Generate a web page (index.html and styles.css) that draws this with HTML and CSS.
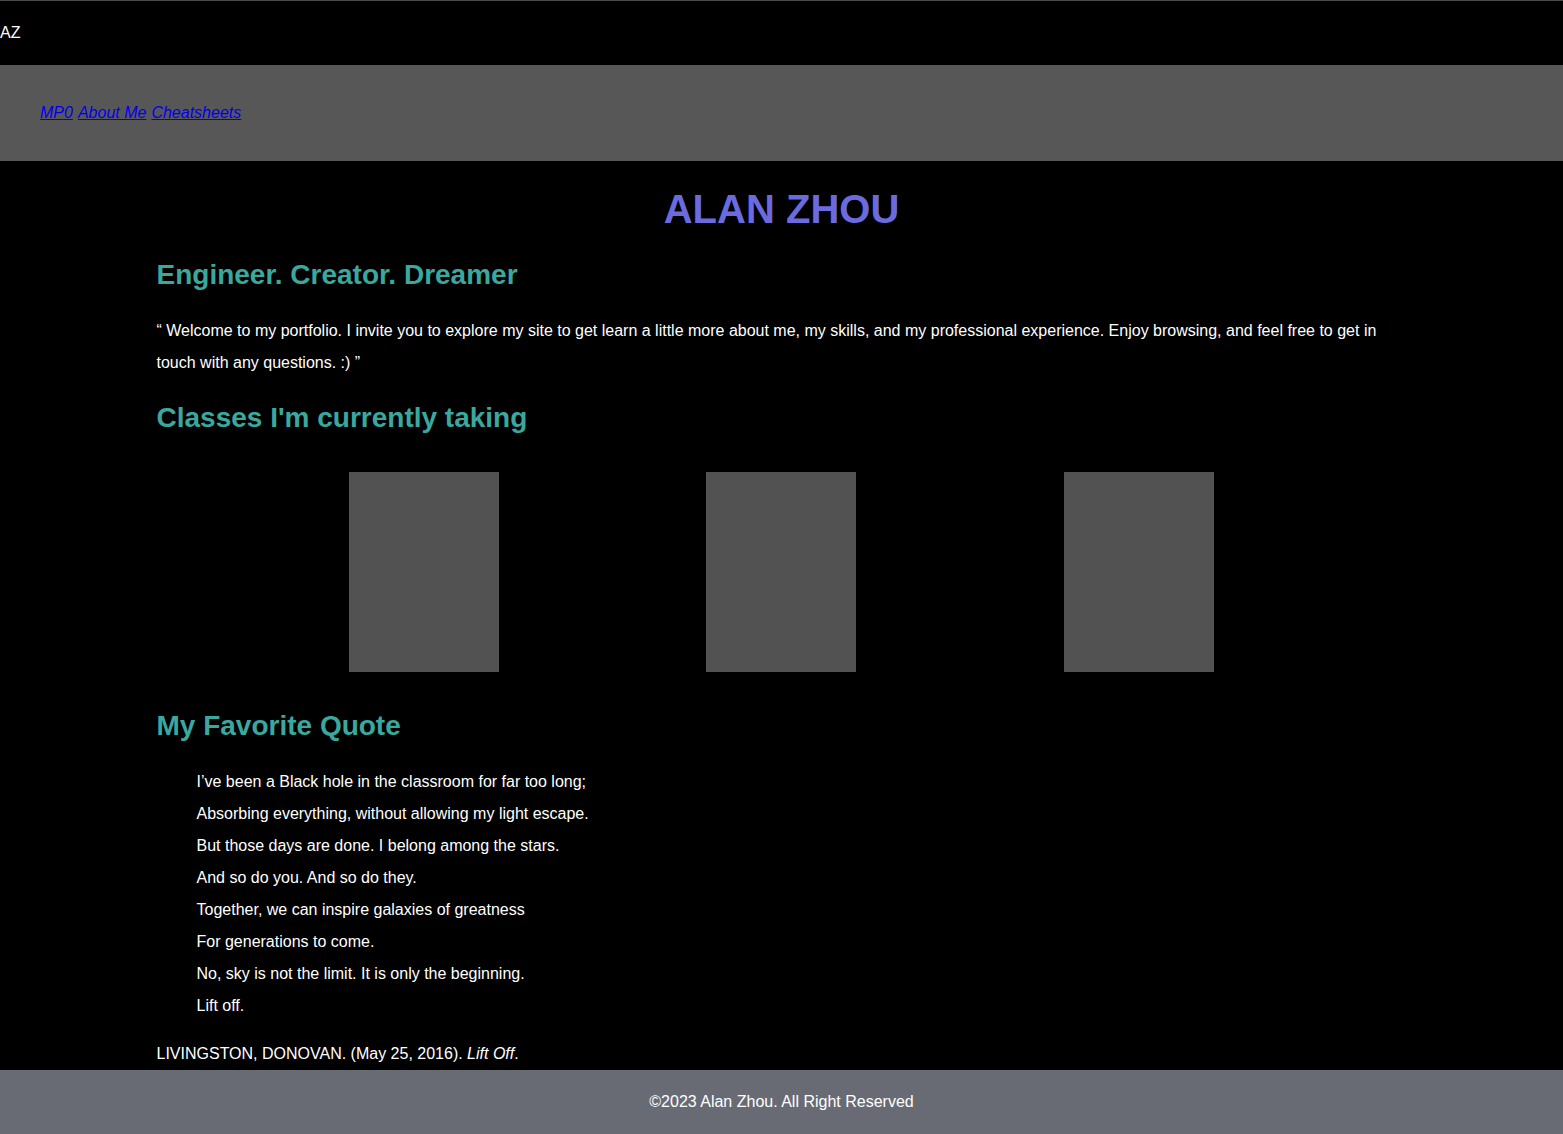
FILE: index.html
```html
<!DOCTYPE html>
<html lang="en">
<head>
<meta charset="utf-8">
<title>Alan Zhou</title>
<link rel="stylesheet" href="styles.css">
</head>
<body>
<header class="topbar">
  <span class="logo">AZ</span>
</header>
<nav class="navbar">
  <a href="#">MP0</a>
  <a href="#">About Me</a>
  <a href="#">Cheatsheets</a>
</nav>
<main class="content">
  <h1 class="title">ALAN ZHOU</h1>
  <h2 class="section-head first">Engineer. Creator. Dreamer</h2>
  <p class="intro">“ Welcome to my portfolio. I invite you to explore my site to get learn a little more about me, my skills, and my professional experience. Enjoy browsing, and feel free to get in touch with any questions. :) ”</p>
  <h2 class="section-head classes-head">Classes I'm currently taking</h2>
  <div class="classes">
    <div class="class-card"></div>
    <div class="class-card"></div>
    <div class="class-card"></div>
  </div>
  <h2 class="section-head quote-head">My Favorite Quote</h2>
  <blockquote class="poem">
    <p>I’ve been a Black hole in the classroom for far too long;</p>
    <p>Absorbing everything, without allowing my light escape.</p>
    <p>But those days are done. I belong among the stars.</p>
    <p>And so do you. And so do they.</p>
    <p>Together, we can inspire galaxies of greatness</p>
    <p>For generations to come.</p>
    <p>No, sky is not the limit. It is only the beginning.</p>
    <p>Lift off.</p>
  </blockquote>
  <p class="cite">LIVINGSTON, DONOVAN. (May 25, 2016). <em>Lift Off</em>.</p>
</main>
<footer class="footer">©2023 Alan Zhou. All Right Reserved</footer>
</body>
</html>
```
FILE: styles.css
```css
html, body {
  margin: 0;
  padding: 0;
}
body {
  background: #000;
  color: #fff;
  font-family: "Liberation Sans", Arial, sans-serif;
  font-size: 16px;
  border-top: 1px solid #4a4a4a;
}
.topbar {
  height: 64px;
  display: flex;
  align-items: center;
}
.logo {
  font-size: 16px;
  color: #fff;
  line-height: 20px;
  padding-bottom: 1px;
}
.navbar {
  background: #575757;
  height: 96px;
  display: flex;
  align-items: center;
  padding-left: 40px;
  gap: 5px;
  font-style: italic;
}
.navbar a {
  color: #0000ee;
  text-decoration: underline;
}
.content {
  width: 1250px;
  margin: 0 auto;
}
.title {
  margin: 25px 0 0;
  text-align: center;
  font-size: 40px;
  line-height: 46px;
  font-weight: bold;
  color: #6b6bdf;
}
.section-head {
  margin: 24px 0 0;
  font-size: 28px;
  line-height: 32px;
  font-weight: bold;
  color: #3aa89e;
}
.section-head.first {
  margin-top: 27px;
}
.section-head.classes-head {
  margin-top: 23px;
}
.intro {
  margin: 24px 0 0;
  line-height: 32px;
}
.classes {
  margin-top: 38px;
  padding: 0 193px 0 192px;
  display: flex;
  justify-content: space-between;
}
.class-card {
  width: 150px;
  height: 200px;
  background: #525252;
}
.quote-head {
  margin-top: 38px;
}
.poem {
  margin: 24px 0 0 40px;
}
.poem p {
  margin: 0;
  line-height: 32px;
}
.cite {
  margin: 16px 0 0;
  line-height: 32px;
}
.footer {
  background: #686b73;
  height: 64px;
  display: flex;
  align-items: center;
  justify-content: center;
  color: #fff;
}
```
